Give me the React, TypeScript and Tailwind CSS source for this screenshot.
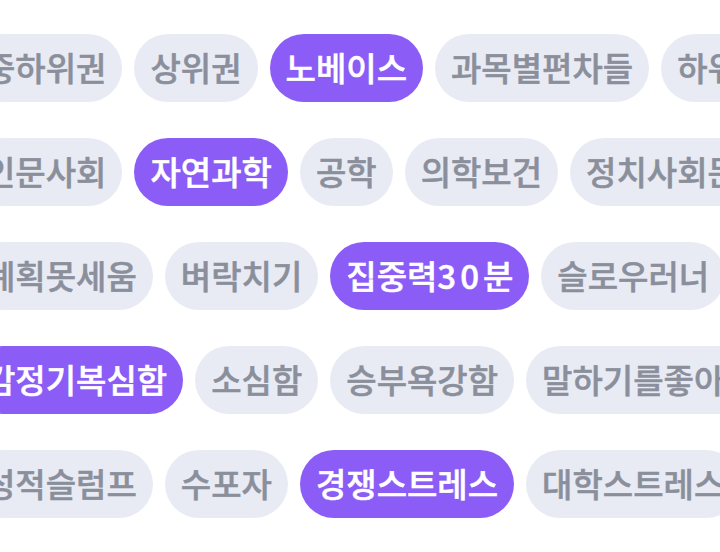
import React from 'react';

type Tag = { label: React.ReactNode; id: string; active?: boolean };

const ROWS: Tag[][] = [
  [
    { id: 'a1', label: '중하위권' },
    { id: 'a2', label: '상위권' },
    { id: 'a3', label: '노베이스', active: true },
    { id: 'a4', label: '과목별편차들' },
    { id: 'a5', label: '하위권' },
  ],
  [
    { id: 'b1', label: '인문사회' },
    { id: 'b2', label: '자연과학', active: true },
    { id: 'b3', label: '공학' },
    { id: 'b4', label: '의학보건' },
    { id: 'b5', label: '정치사회문화' },
  ],
  [
    { id: 'c1', label: '계획못세움' },
    { id: 'c2', label: '벼락치기' },
    {
      id: 'c3',
      label: (
        <>
          집중력<span className="tracking-[4px]">30</span>분
        </>
      ),
      active: true,
    },
    { id: 'c4', label: '슬로우러너' },
  ],
  [
    { id: 'd1', label: '감정기복심함', active: true },
    { id: 'd2', label: '소심함' },
    { id: 'd3', label: '승부욕강함' },
    { id: 'd4', label: '말하기를좋아함' },
  ],
  [
    { id: 'e1', label: '성적슬럼프' },
    { id: 'e2', label: '수포자' },
    { id: 'e3', label: '경쟁스트레스', active: true },
    { id: 'e4', label: '대학스트레스' },
  ],
];

const Chip: React.FC<Tag> = ({ label, active }) => (
  <span
    className={
      active
        ? 'shrink-0 h-[68px] px-[16px] flex items-center rounded-full bg-[#8b5cf6] text-white text-[33px] font-medium [-webkit-text-stroke:0.5px_currentColor]'
        : 'shrink-0 h-[68px] px-[16px] flex items-center rounded-full bg-[#e8ebf4] text-[#8a8f9b] text-[33px] font-medium [-webkit-text-stroke:0.5px_currentColor]'
    }
  >
    {label}
  </span>
);

export default function App() {
  return (
    <div
      className="w-[720px] h-[552px] bg-white overflow-hidden flex flex-col justify-center gap-9"
      style={{ fontFamily: '"Noto Sans CJK KR", "Noto Sans", sans-serif' }}
    >
      {ROWS.map((row, i) => (
        <div key={i} className="flex gap-3 -ml-[31px] whitespace-nowrap">
          {row.map((tag) => (
            <Chip key={tag.id} {...tag} />
          ))}
        </div>
      ))}
    </div>
  );
}
